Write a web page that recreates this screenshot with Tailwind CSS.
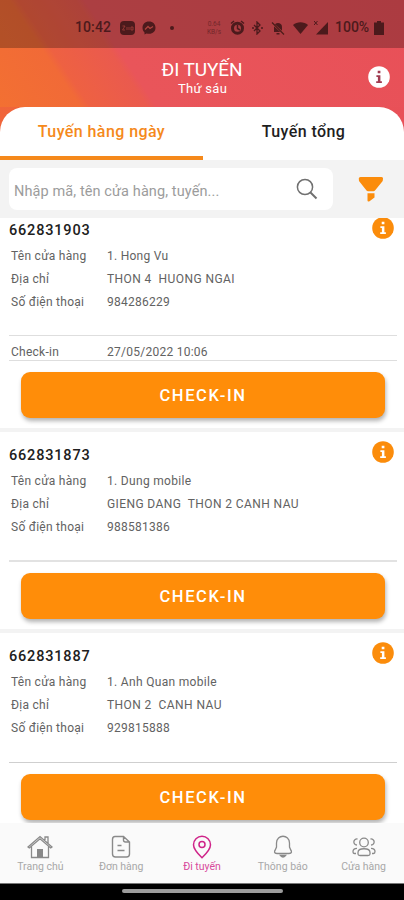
<!DOCTYPE html>
<html lang="vi">
<head>
<meta charset="utf-8">
<title>Đi tuyến</title>
<script src="https://cdn.jsdelivr.net/npm/@tailwindcss/browser@4"></script>
</head>
<body class="w-[404px] h-[900px] overflow-hidden bg-white font-['Roboto',sans-serif] text-[#626262]">
<svg class="hidden">
  <symbol id="info" viewBox="0 0 22 22"><circle cx="11" cy="11" r="10.8" fill="currentColor"/><path d="M9.700 4.800h2.700v2.400H9.700zM8.400 9.200h4v6h1.500v1.700H8.200v-1.700h1.700v-4.300H8.400z" fill="var(--mark)"/></symbol>
</svg>
<div class="flex flex-col h-[900px]">
  <header class="h-[107px] shrink-0 bg-[linear-gradient(56deg,#f37032_0%,#f16a37_17%,#ee6142_19%,#ea5a4e_31%,#e9555a_33%,#e85058_100%)]">
    <div class="h-12 bg-black/26 flex items-center pt-[7px] pl-[75px] text-[#4c1a1c]">
      <span class="w-[45px] text-[14px] font-medium tracking-[0.1px]">10:42</span>
      <svg class="w-[15px] h-[14px]" viewBox="0 0 15 14"><rect width="15" height="14" rx="4" fill="currentColor"/><path d="M2.500 5h2.500l-2.500 4h2.500M7 6v3M9 6v3M11 6h2v3h-2z" fill="none" stroke="#9a3a36" stroke-width=".9"/></svg>
      <svg class="w-[14px] h-[14px] ml-[7px]" viewBox="0 0 14 14"><path d="M7 .5C3 .5.5 3.200.5 6.800c0 2 .8 3.500 2 4.600v2l2-1c5 1.500 9-1.200 9-5.600C13.500 3.200 11 .5 7 .5z" fill="currentColor"/><path d="M3 8.500l3-3 2 2 3-2" fill="none" stroke="#ad433d" stroke-width="1.300"/></svg>
      <span class="w-1 h-1 rounded-full bg-current ml-[14px]"></span>
      <span class="ml-[31px] w-[18px] flex flex-col text-[6.500px] leading-[8px] text-center opacity-60"><span>0.64</span><span>KB/s</span></span>
      <svg class="w-[15px] h-[15px] ml-[7px]" viewBox="0 0 15 15"><circle cx="7.500" cy="8.200" r="5" fill="none" stroke="currentColor" stroke-width="3"/><path d="M1 3.500L4 1M11 1l3 2.500M7.500 5v3.500L10 10" stroke="currentColor" stroke-width="1.500" fill="none"/></svg>
      <svg class="w-[11px] h-[14px] ml-[7px]" viewBox="0 0 11 14"><path d="M2 4l6 6-3 3V1l3 3-6 6M0 7h2M9 7h2" fill="none" stroke="currentColor" stroke-width="1.300"/></svg>
      <svg class="w-[14px] h-[14px] ml-[8px]" viewBox="0 0 14 14"><path d="M3 11V6c0-3 2-4 4-4s4 1 4 4v5zM5.500 12h3v1.500h-3z" fill="currentColor"/><path d="M1 2l12 11" stroke="#ad433d" stroke-width="2.200"/><path d="M1 1.500l12 12" stroke="currentColor" stroke-width="1.300"/></svg>
      <svg class="w-[15px] h-[12px] ml-[8px]" viewBox="0 0 15 12"><path d="M0 3C4-.6 11-.6 15 3L7.500 12z" fill="currentColor"/></svg>
      <svg class="w-[14px] h-[14px] ml-[6px]" viewBox="0 0 14 14"><path d="M14 1v12.500H2z" fill="currentColor"/><path d="M0 0l3.500 4M3.500 0L0 4" stroke="currentColor"/></svg>
      <span class="ml-[7px] w-[36px] text-[14px] font-medium whitespace-nowrap">100%</span>
      <svg class="w-[10px] h-[14px] ml-[3px]" viewBox="0 0 10 14"><path d="M3 0h4v1.500h3V14H0V1.500h3z" fill="currentColor"/></svg>
    </div>
    <div class="flex h-[58px] text-white">
      <div class="w-[54px]"></div>
      <div class="flex-1 text-center pt-[11px]">
        <h1 class="text-[19px] leading-[22px] tracking-[-0.1px]">ĐI TUYẾN</h1>
        <p class="text-[13px] leading-[15px] tracking-[0.3px] ml-[1px]">Thứ sáu</p>
      </div>
      <div class="w-[54px] pt-[18px] pl-[18px]"><svg class="w-[22px] h-[22px] [--mark:#a03a50]"><use href="#info"/></svg></div>
    </div>
  </header>
  <div class="h-[53px] shrink-0 bg-[linear-gradient(90deg,#f0653a,#e85058)]">
    <nav class="h-full flex rounded-t-[25px] bg-white text-center text-base font-medium leading-[50px] overflow-hidden">
      <div class="w-[203px] border-b-4 border-[#f5891b] text-[#f5891b]"><span class="tracking-[0.42px]">Tuyến hàng ngày</span></div>
      <div class="w-[201px] text-[#1e1e1e]"><span class="tracking-[0.4px]">Tuyến tổng</span></div>
    </nav>
  </div>
  <div class="h-[58px] shrink-0 bg-[#f3f3f3] flex items-start pt-2 pl-[9px]">
    <div class="w-[324px] h-[42px] rounded-lg bg-white flex items-center pl-[5px] text-[#9c9c9c]">
      <span class="w-[282px] text-[14.500px] pt-[5px] tracking-[0.1px]">Nhập mã, tên cửa hàng, tuyến...</span>
      <svg class="w-[22px] h-[22px]" viewBox="0 0 22 22" fill="none" stroke="#707070" stroke-width="1.500"><circle cx="9" cy="9" r="7.600"/><path d="M14.500 14.500l6 6" stroke-width="2"/></svg>
    </div>
    <svg class="w-[26px] h-[26px] ml-[25px] mt-[8px]" viewBox="0 0 26 26" fill="#fb8c0b"><path d="M2.500 1h21c1 0 1.700.8 1.500 1.800l-.3 2.200L17 14.500q-.6.7-1.500.7H10q-.9 0-1.500-.7L1 5 .8 2.800C.8 1.700 1.500 1 2.500 1zM9.500 17.300h7v4.200l-5 3.700q-2 .6-2-.7z"/></svg>
  </div>

  <main class="flex-1 min-h-0 overflow-hidden text-[12px] leading-[23.200px] tracking-[0.26px]">
    <article class="h-[210px] flex flex-col">
      <div class="flex justify-between h-[26px] pl-[9px] pr-[10px]"><h2 class="text-[14.500px] font-medium tracking-[0.82px] text-[#202020] leading-[26px]">662831903</h2><svg class="w-[22px] h-[22px] -mt-[1px] text-[#fb8c0b] [--mark:#fff]"><use href="#info"/></svg></div>
      <dl class="grid grid-cols-[96px_1fr] content-start pl-[11px] pt-px h-[91px]"><dt>Tên cửa hàng</dt><dd>1. Hong Vu</dd><dt>Địa chỉ</dt><dd class="whitespace-pre tracking-[0.42px]">THON 4  HUONG NGAI</dd><dt>Số điện thoại</dt><dd>984286229</dd></dl>
      <div class="ml-[9px] mr-[7px] h-[26px] shrink-0 border-y border-[#dedede] flex pl-[2px] leading-[32px]"><span class="w-[96px]">Check-in</span><span>27/05/2022 10:06</span></div>
      <button class="ml-[21px] mt-[11px] mb-[10px] w-[364px] h-[46px] shrink-0 rounded-[9px] bg-[#ff8d09] text-white text-[16.500px] font-medium tracking-[1.600px] pt-[2px] shadow-[1px_3px_4px_rgba(0,0,0,.3)]">CHECK-IN</button>
    </article>
    <article class="h-[201px] pt-[3px] border-t-4 border-[#f3f3f3] flex flex-col">
      <div class="flex justify-between h-[44px] pl-[9px] pr-[10px] pt-[6px]"><h2 class="text-[14.500px] font-medium tracking-[0.82px] text-[#202020] leading-[29px]">662831873</h2><svg class="w-[22px] h-[22px] text-[#fb8c0b] [--mark:#fff]"><use href="#info"/></svg></div>
      <dl class="-mt-[10px] grid grid-cols-[96px_1fr] content-start pl-[11px] pt-px h-[91px]"><dt>Tên cửa hàng</dt><dd class="tracking-[0.32px]">1. Dung mobile</dd><dt>Địa chỉ</dt><dd class="whitespace-pre tracking-[0.4px]">GIENG DANG  THON 2 CANH NAU</dd><dt>Số điện thoại</dt><dd>988581386</dd></dl>
      <div class="ml-[9px] mr-[7px] h-[2px] shrink-0 bg-[#e2e2e2]"></div>
      <button class="ml-[21px] mt-[11px] w-[364px] h-[46px] shrink-0 rounded-[9px] bg-[#ff8d09] text-white text-[16.500px] font-medium tracking-[1.600px] pt-[2px] shadow-[1px_3px_4px_rgba(0,0,0,.3)]">CHECK-IN</button>
    </article>
    <article class="h-[201px] pt-[3px] border-t-4 border-[#f3f3f3] flex flex-col">
      <div class="flex justify-between h-[44px] pl-[9px] pr-[10px] pt-[6px]"><h2 class="text-[14.500px] font-medium tracking-[0.82px] text-[#202020] leading-[29px]">662831887</h2><svg class="w-[22px] h-[22px] text-[#fb8c0b] [--mark:#fff]"><use href="#info"/></svg></div>
      <dl class="-mt-[10px] grid grid-cols-[96px_1fr] content-start pl-[11px] pt-px h-[92px]"><dt>Tên cửa hàng</dt><dd class="tracking-[0.32px]">1. Anh Quan mobile</dd><dt>Địa chỉ</dt><dd class="whitespace-pre tracking-[0.42px]">THON 2  CANH NAU</dd><dt>Số điện thoại</dt><dd>929815888</dd></dl>
      <div class="ml-[9px] mr-[7px] h-px shrink-0 bg-[#cfcfcf]"></div>
      <button class="ml-[21px] mt-[11px] w-[364px] h-[46px] shrink-0 rounded-[9px] bg-[#ff8d09] text-white text-[16.500px] font-medium tracking-[1.600px] pt-[2px] shadow-[1px_3px_4px_rgba(0,0,0,.3)]">CHECK-IN</button>
    </article>
  </main>

  <footer class="h-[60px] shrink-0 bg-[#fafafa] grid grid-cols-5 text-center text-[10.500px] leading-[13px] text-[#a8a8a8] pt-[12px] [&_svg]:mx-auto [&_svg]:mb-[1px] [&_svg]:h-[24px]">
    <div><svg class="w-[26px]" viewBox="0 0 26 24" fill="none" stroke="#8a8a8a" stroke-width="1.300"><path d="M1 12L13 1.500 25 12l-1.300 1L13 3.800 2.300 13zM4.500 11v11.500h17V11M18 5V2h3v6"/><path d="M10 14h6v8.500h-6z" fill="#888" stroke="none"/></svg>Trang chủ</div>
    <div><svg class="w-[20px]" viewBox="0 0 20 24" fill="none" stroke="#8a8a8a" stroke-width="1.400"><path d="M4 1.500h8.500L18.500 7v12q0 3-3 3H4.500q-3 0-3-3V4.500q0-3 2.500-3zM12.500 2v3q0 2 2 2h4M6.500 10.500h4M6.500 15.500h7"/></svg>Đơn hàng</div>
    <div class="text-[#d84a9c]"><svg class="w-[20px]" viewBox="0 0 20 24" fill="none" stroke="#cf2489" stroke-width="1.500"><path d="M10 22.800C6 19 1.500 14.700 1.500 9.800a8.500 8.500 0 0117 0c0 4.900-4.500 9.200-8.500 13z"/><circle cx="10" cy="9.500" r="3"/></svg>Đi tuyến</div>
    <div><svg class="w-[20px]" viewBox="0 0 20 24" fill="none" stroke="#8a8a8a" stroke-width="1.300"><path d="M4 18.500c-3 0-3-2-1.500-4L3.500 12V8c0-9 13-9 13 0v4l1 2.500c1.500 2 1.500 4-1.500 4zM7.500 20.500q2.500 3 5 0z"/></svg>Thông báo</div>
    <div><svg class="w-[24px]" viewBox="0 0 24 24" fill="none" stroke="#8a8a8a" stroke-width="1.300"><circle cx="12" cy="7.500" r="4.300"/><path d="M6 19v-1.500c0-5 12-5 12 0V19q0 1.500-2 1.500H8q-2 0-2-1.500zM5.500 4C1 3.500.5 9.500 5 10M18.500 4c4.500-.5 5 5.500.5 6M4 18.500H2.500Q1 18.500 1 16.500q0-3 4-3.200M20 18.500h1.500q1.500 0 1.500-2 0-3-4-3.200"/></svg>Cửa hàng</div>
  </footer>
  <div class="h-[17px] shrink-0 bg-black border-t border-[#777] flex justify-center pt-[5px]"><div class="w-[161px] h-[4px] rounded-full bg-[#9c9c9c]"></div></div>
</div>
</body>
</html>
